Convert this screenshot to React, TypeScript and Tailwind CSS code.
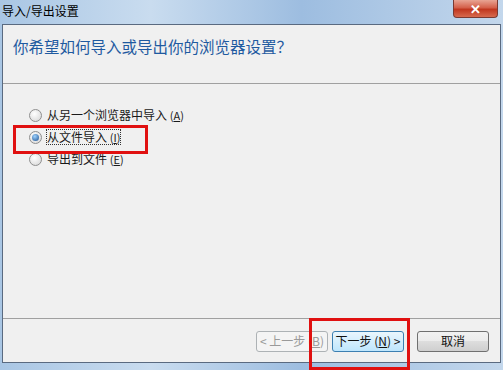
import React from 'react';

const font = { fontFamily: '"Noto Sans CJK SC", "Liberation Sans", sans-serif' };

const Radio = ({ checked }: { checked?: boolean }) => (
    <span className="w-[13px] h-[13px] rounded-full border border-[#8f8f8f] bg-[radial-gradient(circle_at_40%_35%,#ffffff,#d4d4d4)] flex items-center justify-center shrink-0">
        {checked && (
            <span className="w-[7px] h-[7px] rounded-full bg-[radial-gradient(circle_at_40%_35%,#9fd3ff,#1b4f8f)]" />
        )}
    </span>
);

const Option = ({ label, mnemonic, checked, focused }: { label: string; mnemonic: string; checked?: boolean; focused?: boolean }) => (
    <div className="flex items-center gap-[5px] h-[22px]">
        <Radio checked={checked} />
        <span className={`text-[12px] leading-[14px] text-[#1a1a1a] ${focused ? 'outline outline-1 outline-dotted outline-[#333]' : ''}`}>
            {label} <span className="text-[11px]">(<span className="underline">{mnemonic}</span>)</span>
        </span>
    </div>
);

const WinButton = ({ children, disabled, primary }: { children: React.ReactNode; disabled?: boolean; primary?: boolean }) => (
    <button
        className={`h-[21px] w-[72px] rounded-[3px] border text-[12px] leading-none flex items-center justify-center
            ${disabled ? 'border-[#adb2b5] bg-[#f4f4f4] text-[#9a9a9a]' : primary ? 'border-[#3c7fb1] bg-[linear-gradient(#eaf6fd,#bee6fd)] text-[#111]' : 'border-[#707070] bg-[linear-gradient(#f2f2f2,#ebebeb_50%,#dddddd_50%,#cfcfcf)] text-[#111]'}`}
    >
        {children}
    </button>
);

export default function App() {
    return (
        <div className="relative w-[503px] h-[370px] overflow-hidden flex flex-col bg-[linear-gradient(90deg,#a9c6e4,#c9dcef_30%,#9dbde0_60%,#c3d7ec)]" style={font}>
            {/* title bar */}
            <div className="h-[24px] flex items-start justify-between pl-[2px] pr-[5px]">
                <span className="text-[12px] leading-[12px] mt-[5px] text-black">导入/导出设置</span>
                <div className="w-[45px] h-[18px] rounded-b-[4px] border border-t-0 border-[#7a3a32] bg-[linear-gradient(#e8a493,#d4604a_45%,#c0371f_55%,#d76a4f)] flex items-center justify-center">
                    <span className="text-white text-[13px] font-bold leading-none">✕</span>
                </div>
            </div>

            {/* client area */}
            <div className="flex-1 mx-[2px] mb-[7px] border border-[#5a6a80] bg-[#f0f0f0] flex flex-col">
                <div className="h-[59px] border-b border-[#a0a0a0] pl-[10px] pt-[9px]">
                    <span className="text-[15.5px] leading-[18px] text-[#1f5aa0]">你希望如何导入或导出你的浏览器设置？</span>
                </div>
                <div className="flex-1 pl-[26px] pt-[20px] flex flex-col">
                    <Option label="从另一个浏览器中导入" mnemonic="A" />
                    <Option label="从文件导入" mnemonic="I" checked focused />
                    <Option label="导出到文件" mnemonic="E" />
                </div>
                <div className="h-[44px] border-t border-[#a0a0a0] flex items-center justify-end gap-[13px] pr-[11px] pt-[1px]">
                    <div className="flex gap-[4px]">
                        <WinButton disabled>&lt; 上一步 (<span className="underline">B</span>)</WinButton>
                        <WinButton primary>下一步 (<span className="underline">N</span>) &gt;</WinButton>
                    </div>
                    <WinButton>取消</WinButton>
                </div>
            </div>

            {/* red highlight boxes */}
            <div className="absolute left-[13px] top-[125px] w-[135px] h-[29px] border-[3px] border-[#e01010]" />
            <div className="absolute left-[309px] top-[318px] w-[101px] h-[52px] border-[3px] border-[#e01010]" />
        </div>
    );
}
